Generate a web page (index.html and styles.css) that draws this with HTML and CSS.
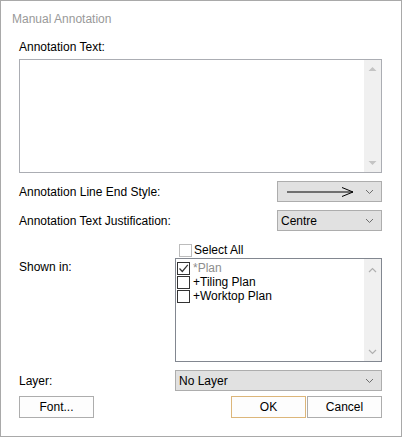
FILE: index.html
```html
<!DOCTYPE html>
<html>
<head>
<meta charset="utf-8">
<link rel="stylesheet" href="styles.css">
</head>
<body>
<div class="dialog">
  <div class="titlebar">Manual Annotation</div>
  <div class="content">
    <div class="caption">Annotation Text:</div>
    <div class="textarea">
      <div class="ta-area"></div>
      <div class="vscroll">
        <svg class="sb-arrow" width="9" height="6" viewBox="0 0 9 6"><path d="M0.5 5 L4.5 1 L8.5 5 Z" fill="#c4c4c4"/></svg>
        <svg class="sb-arrow" width="9" height="6" viewBox="0 0 9 6"><path d="M0.5 1 L4.5 5 L8.5 1 Z" fill="#c4c4c4"/></svg>
      </div>
    </div>

    <div class="row first">
      <span class="label">Annotation Line End Style:</span>
      <div class="combo small">
        <svg class="end-arrow" width="70" height="12" viewBox="0 0 70 12"><path d="M0 6 H66" stroke="#000" stroke-width="1.2"/><path d="M55 1.5 L66 6 L55 10.5" fill="none" stroke="#000" stroke-width="1"/></svg>
        <svg class="chev" width="9" height="6" viewBox="0 0 9 6"><path d="M1 1 L4.5 4.5 L8 1" fill="none" stroke="#6d6d6d" stroke-width="1"/></svg>
      </div>
    </div>

    <div class="row second">
      <span class="label">Annotation Text Justification:</span>
      <div class="combo small">
        <span class="combo-text">Centre</span>
        <svg class="chev" width="9" height="6" viewBox="0 0 9 6"><path d="M1 1 L4.5 4.5 L8 1" fill="none" stroke="#6d6d6d" stroke-width="1"/></svg>
      </div>
    </div>

    <div class="grid">
      <div></div>
      <div class="selectall">
        <span class="cb disabled"></span>
        <span>Select All</span>
      </div>
      <div class="label shown">Shown in:</div>
      <div class="list">
        <div class="items">
          <div class="item">
            <span class="cb checked"><svg width="11" height="11" viewBox="0 0 11 11"><path d="M1.5 5.5 L4.3 8.5 L9.8 1.8" fill="none" stroke="#333" stroke-width="1.2"/></svg></span>
            <span class="greyed">*Plan</span>
          </div>
          <div class="item">
            <span class="cb"></span>
            <span>+Tiling Plan</span>
          </div>
          <div class="item">
            <span class="cb"></span>
            <span>+Worktop Plan</span>
          </div>
        </div>
        <div class="vscroll list-sb">
          <svg class="sb-arrow" width="9" height="6" viewBox="0 0 9 6"><path d="M1 5 L4.5 1.5 L8 5" fill="none" stroke="#b0b0b0" stroke-width="1.2"/></svg>
          <svg class="sb-arrow" width="9" height="6" viewBox="0 0 9 6"><path d="M1 1 L4.5 4.5 L8 1" fill="none" stroke="#b0b0b0" stroke-width="1.2"/></svg>
        </div>
      </div>
      <div class="label layer">Layer:</div>
      <div class="combo wide">
        <span class="combo-text">No Layer</span>
        <svg class="chev" width="9" height="6" viewBox="0 0 9 6"><path d="M1 1 L4.5 4.5 L8 1" fill="none" stroke="#6d6d6d" stroke-width="1"/></svg>
      </div>
    </div>

    <div class="buttons">
      <button class="btn">Font...</button>
      <div class="right-btns">
        <button class="btn default">OK</button>
        <button class="btn">Cancel</button>
      </div>
    </div>
  </div>
</div>
</body>
</html>
```

FILE: styles.css
```css
html, body {
  margin: 0;
  padding: 0;
  background: #fff;
}
body {
  font-family: "Liberation Sans", Arial, sans-serif;
  font-size: 12px;
  color: #000;
}
.dialog {
  width: 402px;
  height: 437px;
  box-sizing: border-box;
  border: 1px solid #a9a9a9;
  background: #fff;
  display: flex;
  flex-direction: column;
}
.titlebar {
  height: 36px;
  padding-left: 11px;
  display: flex;
  align-items: center;
  color: #999;
  font-size: 12px;
}
.content {
  padding: 0 19px 0 18px;
  display: flex;
  flex-direction: column;
}
.caption {
  margin-top: 2px;
  height: 16px;
  line-height: 16px;
}
.textarea {
  margin-top: 4px;
  height: 114px;
  box-sizing: border-box;
  border: 1px solid #abadb3;
  display: flex;
}
.ta-area {
  flex: 1;
}
.vscroll {
  width: 17px;
  background: #f0f0f0;
  display: flex;
  flex-direction: column;
  justify-content: space-between;
  align-items: center;
  padding: 6px 0;
}
.row {
  display: flex;
  justify-content: space-between;
  align-items: center;
  height: 21px;
}
.row.first { margin-top: 8px; }
.row.second { margin-top: 8px; }
.combo {
  height: 21px;
  box-sizing: border-box;
  border: 1px solid #adadad;
  background: #e1e1e1;
  display: flex;
  align-items: center;
  justify-content: space-between;
  padding: 0 7px 0 3px;
}
.combo.small { width: 105px; }
.end-arrow { margin-left: 6px; }
.combo-text { line-height: 16px; }
.grid {
  margin-top: 12px;
  display: grid;
  grid-template-columns: 156px 1fr;
  grid-template-rows: auto auto auto;
}
.selectall {
  display: flex;
  align-items: center;
  gap: 2px;
  padding-left: 4px;
  height: 14px;
}
.cb {
  width: 13px;
  height: 13px;
  box-sizing: border-box;
  border: 1px solid #333;
  background: #fff;
  display: inline-flex;
  align-items: center;
  justify-content: center;
  flex: none;
}
.cb.disabled { border-color: #bcbcbc; }
.list {
  margin-top: 1px;
  height: 104px;
  box-sizing: border-box;
  border: 1px solid #828790;
  display: flex;
}
.label.shown { margin-top: 1px; padding-top: 2px; }
.items {
  flex: 1;
  padding: 2px 0 0 1px;
}
.item {
  height: 14px;
  display: flex;
  align-items: center;
  gap: 3px;
}
.greyed { color: #8d8d8d; }
.list-sb { padding: 8px 0 6px; }
.label.layer {
  margin-top: 8px;
  height: 21px;
  display: flex;
  align-items: center;
}
.combo.wide { margin-top: 8px; }
.buttons {
  margin-top: 5px;
  display: flex;
  justify-content: space-between;
}
.right-btns {
  display: flex;
  gap: 1px;
}
.btn {
  width: 75px;
  height: 22px;
  box-sizing: border-box;
  border: 1px solid #adadad;
  background: #fdfdfd;
  font-family: "Liberation Sans", Arial, sans-serif;
  font-size: 12px;
  color: #000;
  padding: 0;
}
.btn.default {
  border-color: #dcb67a;
}
```
